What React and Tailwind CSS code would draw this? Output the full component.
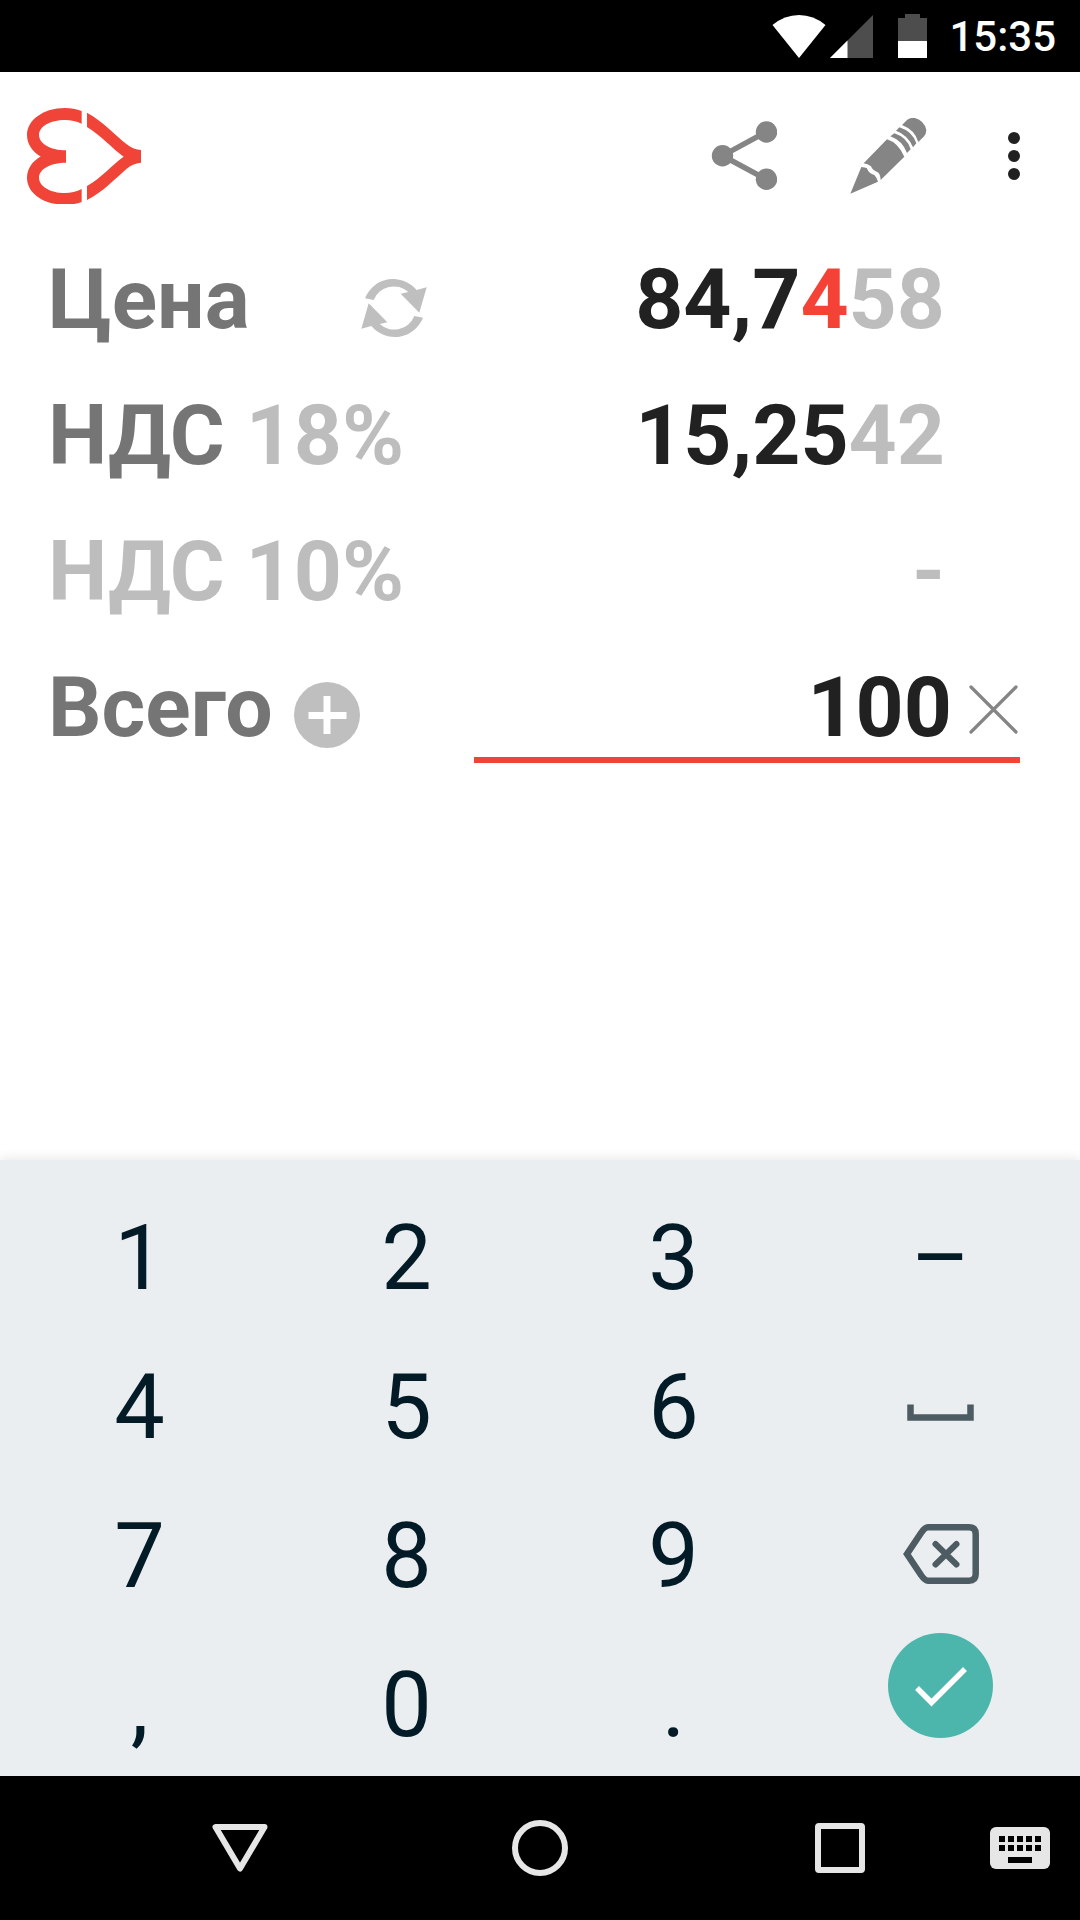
function StatusBar() {
  return (
    <div className="h-[72px] bg-black flex items-center justify-end pr-6">
      <svg className="w-[54px] h-[43px]" viewBox="0 0 54 43">
        <path d="M0.5 10 Q12.500 0 27 0 Q41.500 0 53.500 10 L27 43Z" fill="#fff" />
      </svg>
      <svg className="w-[43px] h-[43px] ml-[4px]" viewBox="0 0 43 43">
        <path d="M0 43 L43 0 V43Z" fill="#4d4d4d" />
        <path d="M0 43 L17.500 25.500 V43Z" fill="#fff" />
      </svg>
      <svg className="w-[29px] h-[44px] ml-[25px]" viewBox="0 0 29 44">
        <path d="M7 0 H22 V4 H29 V27.500 H0 V4 H7Z" fill="#4d4d4d" />
        <path d="M0 27 H29 V44 H0Z" fill="#fff" />
      </svg>
      <span className="ml-[22px] mt-0.5 text-[42px] leading-[72px] font-medium text-white">15:35</span>
    </div>
  )
}

function Header() {
  return (
    <div className="h-[160px] pt-2 pl-[27px] pr-[60px] flex items-center">
      <svg className="w-[114px] h-[96px]" viewBox="81 84 342 288" fill="#f04438">
        <path d="M245 93C230 87 212 84 195 84C130 84 81 120 81 165C81 191 96 214 122 229.500C96 244 81 267 81 293C81 339 130 374 195 374C212 374 230 372 245 366V327C230 335 212 339 195 339C150 339 117 318 117 293C117 268 150 248 198 248V211C150 211 117 190 117 165C117 140 150 120 195 120C212 120 230 124 245 131Z" />
        <path d="M261 98C310 125 345 165 380 193C395 204 408 210 423 210V248C405 250 392 256 380 266C345 296 310 335 261 360V318C305 293 335 255 371 230C335 204 305 168 261 141Z" />
      </svg>
      <svg className="w-[66px] h-[70px] ml-auto" viewBox="711 121 66 70" fill="#858585">
        <path d="M766 132 L722.500 155.700 L766 179.300" fill="none" stroke="#858585" strokeWidth="5.500" />
        <circle cx="766.500" cy="132" r="10.700" />
        <circle cx="722.500" cy="155.700" r="10.700" />
        <circle cx="766.500" cy="179.300" r="10.700" />
      </svg>
      <svg className="w-[77px] h-[76px] ml-[73px]" viewBox="510 84 231 228" fill="#858585">
        <path d="M511 311L544 231Q554 232 560 234Q567 251 583 255Q590 262 594 275Z" />
        <path d="M551 220L621 148Q654 158 673 200L602 270Q601 251 592 246Q578 242 573 229Q563 221 551 220Z" />
        <path d="M631 139L643 130Q681 142 692 178L681 189Q667 152 631 139Z" />
        <path d="M648 122L658 112Q697 124 709 160L699 172Q684 135 648 122Z" />
        <path d="M666 105L681 90Q690 82 705 84Q733 92 739 120Q739 132 731 140L715 156Q705 120 666 105Z" />
      </svg>
      <svg className="w-3 h-12 ml-[81px]" viewBox="0 0 12 48" fill="#212121">
        <circle cx="6" cy="6" r="6" />
        <circle cx="6" cy="24" r="6" />
        <circle cx="6" cy="42" r="6" />
      </svg>
    </div>
  )
}

function RefreshIcon() {
  const arrow = 'M1006 173A91 91 0 0 1 1161 148L1191 140L1169 216L1113 159L1136 154A65 65 0 0 0 1032 178Z'
  return (
    <svg className="w-[66px] h-[62px] mt-[15px]" viewBox="994 109 198 186" fill="#bfbfbf">
      <path d={arrow} />
      <path d={arrow} transform="rotate(180 1093 202)" />
    </svg>
  )
}

function Rows() {
  return (
    <div className="h-[928px] text-[84px] leading-[136px] font-bold text-[#757575] whitespace-pre">
      <div className="h-[136px] pl-12 pr-[135px] flex items-center">
        <span className="w-[313px]">Цена</span>
        <RefreshIcon />
        <span className="ml-auto text-[#212121]">
          84,7<span className="text-[#f44336]">4</span><span className="text-[#bdbdbd]">58</span>
        </span>
      </div>
      <div className="h-[136px] pl-12 pr-[135px] flex items-center justify-between">
        <span>НДС <span className="text-[#bdbdbd]">18%</span></span>
        <span className="text-[#212121]">15,25<span className="text-[#bdbdbd]">42</span></span>
      </div>
      <div className="h-[136px] pl-12 pr-[135px] flex items-center justify-between text-[#bdbdbd]">
        <span>НДС 10%</span>
        <span>-</span>
      </div>
      <div className="h-[136px] pl-12 pr-[60px] flex">
        <span className="w-[246px]">Всего</span>
        <svg className="w-[66px] h-[66px] mt-[42px]" viewBox="0 0 66 66">
          <circle cx="33" cy="33" r="33" fill="#bfbfbf" />
          <path d="M33 14V52M14.500 33.500H52.500" stroke="#fff" strokeWidth="7" />
        </svg>
        <div className="ml-auto w-[546px] h-[123px] border-b-6 border-[#f04438] flex justify-end pr-[2px]">
          <span className="text-[#212121]">100</span>
          <svg className="w-[49px] h-[49px] ml-[17px] mt-[45px]" viewBox="0 0 49 49">
            <path d="M2 2L47 47M47 2L2 47" stroke="#858585" strokeWidth="3.200" strokeLinecap="round" />
          </svg>
        </div>
      </div>
    </div>
  )
}

function SpaceIcon() {
  return (
    <svg className="w-[67px] h-[18px] mt-[70px]" viewBox="0 0 67 18">
      <path d="M3.500 1.500V14.500H63.500V1.500" fill="none" stroke="#4d5b62" strokeWidth="6.500" />
    </svg>
  )
}

function BackspaceIcon() {
  return (
    <svg className="w-[76px] h-[60px] mt-[42px]" viewBox="901 1524 76 60" fill="none" stroke="#4d5b62">
      <path d="M905 1554L919 1533Q923 1527.300 926 1527.300H967Q973.700 1527.300 973.700 1534V1574Q973.700 1580.700 967 1580.700H926Q923 1580.700 919 1575Z" strokeWidth="6.500" />
      <path d="M933.500 1544L954.500 1564.500M954.500 1544L933.500 1564.500" strokeWidth="6" strokeLinecap="round" />
    </svg>
  )
}

function EnterIcon() {
  return (
    <div className="w-[105px] h-[105px] mt-[2px] rounded-full bg-[#4cb6ac]">
      <svg className="w-[105px] h-[105px]" viewBox="0 0 105 105">
        <path d="M29 55L43.500 69.500L77 36" fill="none" stroke="#fff" strokeWidth="5.500" />
      </svg>
    </div>
  )
}

const keys = [
  '1', '2', '3', '–',
  '4', '5', '6', <SpaceIcon />,
  '7', '8', '9', <BackspaceIcon />,
  ',', '0', '.', <EnterIcon />,
]

function Keypad() {
  return (
    <div className="h-[616px] pt-6 px-1.5 bg-[#ebeef1] shadow-[0_0_12px_rgba(0,0,0,0.12)] grid grid-cols-4 auto-rows-[149px] text-[90px] leading-[149px] text-[#021b26]">
      {keys.map((key, i) => (
        <div key={i} className="flex items-start justify-center">{key}</div>
      ))}
    </div>
  )
}

function NavBar() {
  return (
    <div className="relative h-[144px] bg-black flex items-center pl-[212px] pr-[30px]">
      <svg className="w-[56px] h-[48px]" viewBox="0 0 56 48">
        <path d="M3.500 3H52.500L28 44.500Z" fill="none" stroke="#e6e6e6" strokeWidth="6" strokeLinejoin="round" />
      </svg>
      <div className="w-[56px] h-[56px] ml-[244px] rounded-full border-6 border-[#e6e6e6]" />
      <div className="w-[50px] h-[50px] ml-[247px] rounded-[4px] border-6 border-[#e6e6e6]" />
      <svg className="w-[60px] h-[42px] ml-auto" viewBox="0 0 60 42">
        <rect width="60" height="42" rx="6" fill="#e6e6e6" />
        <path d="M9 12H51M9 21H51" stroke="#000" strokeWidth="6" strokeDasharray="6 3" />
        <path d="M18 33H42" stroke="#000" strokeWidth="6" />
      </svg>
    </div>
  )
}

function App() {
  return (
    <div className="w-[1080px] h-[1920px] bg-white overflow-hidden font-[Roboto,sans-serif]">
      <StatusBar />
      <Header />
      <Rows />
      <Keypad />
      <NavBar />
    </div>
  )
}

export default App
